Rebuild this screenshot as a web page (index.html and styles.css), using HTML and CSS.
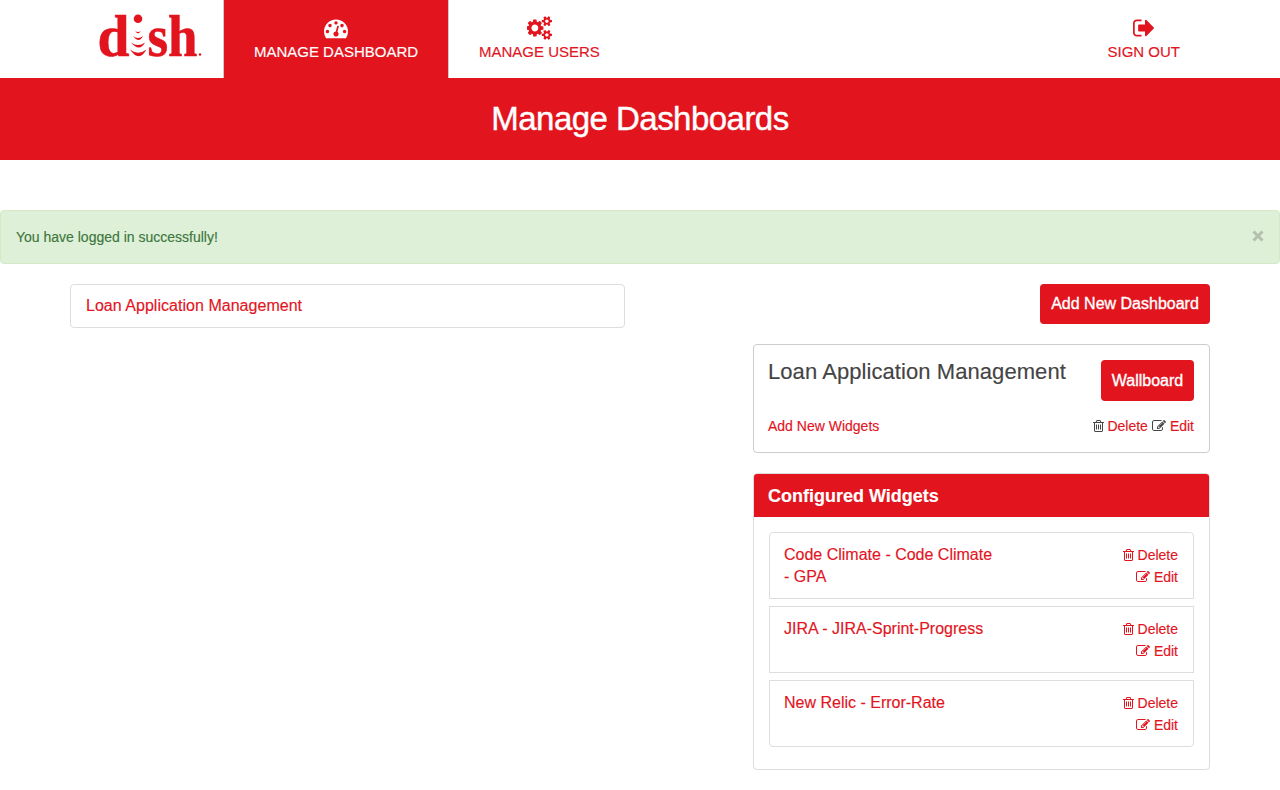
FILE: index.html
```html
<!DOCTYPE html>
<html lang="en">
<head>
<meta charset="utf-8">
<title>Manage Dashboards</title>
<link rel="stylesheet" href="styles.css">
</head>
<body>
<svg class="sprite" aria-hidden="true">
  <symbol id="trash" viewBox="192 0 1408 1792"><path d="M704 736v576q0 14-9 23t-23 9h-64q-14 0-23-9t-9-23v-576q0-14 9-23t23-9h64q14 0 23 9t9 23zm256 0v576q0 14-9 23t-23 9h-64q-14 0-23-9t-9-23v-576q0-14 9-23t23-9h64q14 0 23 9t9 23zm256 0v576q0 14-9 23t-23 9h-64q-14 0-23-9t-9-23v-576q0-14 9-23t23-9h64q14 0 23 9t9 23zm128 724v-948h-896v948q0 22 7 40.5t14.5 27 10.5 8.5h832q3 0 10.5-8.5t14.5-27 7-40.5zm-672-1076h448l-48-117q-7-9-17-11h-317q-10 2-17 11zm928 32v64q0 14-9 23t-23 9h-96v948q0 83-47 143.5t-113 60.5h-832q-66 0-113-58.5t-47-141.5v-952h-96q-14 0-23-9t-9-23v-64q0-14 9-23t23-9h309l70-167q15-37 54-63t79-26h320q40 0 79 26t54 63l70 167h309q14 0 23 9t9 23z"/></symbol>
  <symbol id="edit" viewBox="0 0 1792 1792"><path d="M888 1184l116-116-152-152-116 116v56h96v96h56zm440-720q-16-16-33 1l-350 350q-17 17-1 33t33-1l350-350q17-17 1-33zm80 594v190q0 119-84.5 203.5t-203.5 84.5h-832q-119 0-203.5-84.5t-84.5-203.5v-832q0-119 84.5-203.5t203.5-84.5h832q63 0 117 25 15 7 18 23 3 17-9 29l-49 49q-14 14-32 8-23-6-45-6h-832q-66 0-113 47t-47 113v832q0 66 47 113t113 47h832q66 0 113-47t47-113v-126q0-13 9-22l64-64q15-15 35-7t20 29zm-96-738l288 288-672 672h-288v-288zm444 132l-92 92-288-288 92-92q28-28 68-28t68 28l152 152q28 28 28 68t-28 68z"/></symbol>
</svg>

<nav class="nav">
  <a class="brand" href="#">
    <svg width="108" height="74" viewBox="0 0 108 74" fill="#e2141e">
      <text class="logo-text" x="0.5" y="55" textLength="32" lengthAdjust="spacingAndGlyphs">d</text>
      <circle cx="41" cy="17.800" r="4.300"/>
      <path d="M38 29.500q3 3 6 0q-3 5.500-6 0zM36 35q5 4 10 0q-4 8-10 0zM34 41.500q7 5 14 0q-5.500 10-14 0zM33 48.500q8 6.500 16.500 0q-7.500 13.500-16.500 0z"/>
      <text class="logo-text" x="50.500" y="55" textLength="50" lengthAdjust="spacingAndGlyphs">sh</text>
      <circle cx="103" cy="53.500" r="1.200"/>
    </svg>
  </a>
  <a class="nav-item active" href="#">
    <svg class="nav-icon" width="24" height="24" viewBox="0 0 1792 1792"><path d="M384 1152q0-53-37.5-90.5t-90.5-37.5-90.5 37.5-37.5 90.5 37.5 90.5 90.5 37.5 90.5-37.5 37.5-90.5zm192-448q0-53-37.5-90.5t-90.5-37.5-90.5 37.5-37.5 90.5 37.5 90.5 90.5 37.5 90.5-37.5 37.5-90.5zm428 481l101-382q6-26-7.5-48.5t-38.5-29.5-48 6.5-30 39.5l-101 382q-60 5-107 43.5t-63 98.5q-20 77 20 146t117 89 146-20 89-117q16-60-6-117t-72-91zm660-33q0-53-37.5-90.5t-90.5-37.5-90.5 37.5-37.5 90.5 37.5 90.5 90.5 37.5 90.5-37.5 37.5-90.5zm-640-640q0-53-37.5-90.5t-90.5-37.5-90.5 37.5-37.5 90.5 37.5 90.5 90.5 37.5 90.5-37.5 37.5-90.5zm448 192q0-53-37.5-90.5t-90.5-37.5-90.5 37.5-37.5 90.5 37.5 90.5 90.5 37.5 90.5-37.5 37.5-90.5zm320 448q0 261-141 483-19 29-54 29h-1402q-35 0-54-29-141-221-141-483 0-182 71-348t191-286 286-191 348-71 348 71 286 191 191 286 71 348z"/></svg>
    <span>MANAGE DASHBOARD</span>
  </a>
  <a class="nav-item users" href="#">
    <svg class="nav-icon" width="26" height="24" viewBox="0 0 1920 1792"><path d="M832 896q0-106-75-181t-181-75-181 75-75 181 75 181 181 75 181-75 75-181zm768 512q0-52-38-90t-90-38-90 38-38 90q0 53 37.5 90.5t90.5 37.5 90.5-37.5 37.5-90.5zm0-1024q0-52-38-90t-90-38-90 38-38 90q0 53 37.5 90.5t90.5 37.5 90.5-37.5 37.5-90.5zm-384 421v185q0 10-7 19.5t-16 10.5l-155 24q-11 35-32 76 34 48 90 115 7 11 7 20 0 12-7 19-23 30-82.5 89.5t-78.5 59.5q-11 0-21-7l-115-90q-37 19-77 31-11 108-23 155-7 24-30 24h-186q-11 0-20-7.5t-10-17.5l-23-153q-34-10-75-31l-118 89q-7 7-20 7-11 0-21-8-144-133-144-160 0-9 7-19 10-14 41-53t47-61q-23-44-35-82l-152-24q-10-1-17-9.5t-7-19.5v-185q0-10 7-19.5t16-10.5l155-24q11-35 32-76-34-48-90-115-7-11-7-20 0-12 7-20 22-30 82-89t79-59q11 0 21 7l115 90q34-18 77-32 11-108 23-154 7-24 30-24h186q11 0 20 7.5t10 17.5l23 153q34 10 75 31l118-89q8-7 20-7 11 0 21 8 144 133 144 160 0 8-7 19-12 16-42 54t-45 60q23 48 34 82l152 23q10 2 17 10.5t7 19.5zm640 533v140q0 16-149 31-12 27-30 52 51 113 51 138 0 4-4 7-122 71-124 71-8 0-46-47t-52-68q-20 2-30 2t-30-2q-14 21-52 68t-46 47q-2 0-124-71-4-3-4-7 0-25 51-138-18-25-30-52-149-15-149-31v-140q0-16 149-31 13-29 30-52-51-113-51-138 0-4 4-7 4-2 35-20t59-34 30-16q8 0 46 46.500t52 67.500q20-2 30-2t30 2q51-71 92-112l6-2q4 0 124 70 4 3 4 7 0 25-51 138 17 23 30 52 149 15 149 31zm0-1024v140q0 16-149 31-12 27-30 52 51 113 51 138 0 4-4 7-122 71-124 71-8 0-46-47t-52-68q-20 2-30 2t-30-2q-14 21-52 68t-46 47q-2 0-124-71-4-3-4-7 0-25 51-138-18-25-30-52-149-15-149-31v-140q0-16 149-31 13-29 30-52-51-113-51-138 0-4 4-7 4-2 35-20t59-34 30-16q8 0 46 46.500t52 67.500q20-2 30-2t30 2q51-71 92-112l6-2q4 0 124 70 4 3 4 7 0 25-51 138 17 23 30 52 149 15 149 31z"/></svg>
    <span>MANAGE USERS</span>
  </a>
  <a class="nav-item sign-out" href="#">
    <svg class="nav-icon" width="21" height="24" viewBox="64 0 1568 1792"><path d="M704 1440q0 4 1 20t.5 26.500-3 23.500-10 19.500-20.500 6.500h-320q-119 0-203.500-84.500t-84.500-203.500v-704q0-119 84.500-203.500t203.500-84.500h320q13 0 22.500 9.500t9.500 22.500q0 4 1 20t.5 26.500-3 23.500-10 19.500-20.500 6.500h-320q-66 0-113 47t-47 113v704q0 66 47 113t113 47h312l11.500 1 11.500 3 8 5.500 7 9 2 13.500zm928-544q0 26-19 45l-544 544q-19 19-45 19t-45-19-19-45v-288h-448q-26 0-45-19t-19-45v-384q0-26 19-45t45-19h448v-288q0-26 19-45t45-19 45 19l544 544q19 19 19 45z"/></svg>
    <span>SIGN OUT</span>
  </a>
</nav>

<header class="banner"><h1>Manage Dashboards</h1></header>

<div class="alert">
  <span>You have logged in successfully!</span>
  <svg class="close" width="12" height="12" viewBox="0 0 12 12"><path d="M1.500 1.500l9 9M10.500 1.500l-9 9"/></svg>
</div>

<main class="container">
  <section class="left">
    <a class="dashboard-link" href="#">Loan Application Management</a>
  </section>
  <section class="right">
    <a class="btn add" href="#">Add New Dashboard</a>
    <div class="card">
      <div class="card-row">
        <h2>Loan Application Management</h2>
        <a class="btn wallboard" href="#">Wallboard</a>
      </div>
      <div class="card-links">
        <a href="#">Add New Widgets</a>
        <div class="actions">
          <span class="action"><svg class="trash dark"><use href="#trash"/></svg><a href="#">Delete</a></span>
          <span class="action"><svg class="edit dark"><use href="#edit"/></svg><a href="#">Edit</a></span>
        </div>
      </div>
    </div>
    <div class="panel">
      <h3>Configured Widgets</h3>
      <ul class="widgets">
        <li>
          <a class="name" href="#">Code Climate - Code Climate - GPA</a>
          <div class="item-actions">
            <a class="action" href="#"><svg class="trash"><use href="#trash"/></svg>Delete</a>
            <a class="action" href="#"><svg class="edit"><use href="#edit"/></svg>Edit</a>
          </div>
        </li>
        <li>
          <a class="name" href="#">JIRA - JIRA-Sprint-Progress</a>
          <div class="item-actions">
            <a class="action" href="#"><svg class="trash"><use href="#trash"/></svg>Delete</a>
            <a class="action" href="#"><svg class="edit"><use href="#edit"/></svg>Edit</a>
          </div>
        </li>
        <li>
          <a class="name" href="#">New Relic - Error-Rate</a>
          <div class="item-actions">
            <a class="action" href="#"><svg class="trash"><use href="#trash"/></svg>Delete</a>
            <a class="action" href="#"><svg class="edit"><use href="#edit"/></svg>Edit</a>
          </div>
        </li>
      </ul>
    </div>
  </section>
</main>
</body>
</html>
```
FILE: styles.css
```css
* { box-sizing: border-box; }
body {
  margin: 0;
  background: #fff;
  color: #444;
  font: 14px/20px "Liberation Sans", Arial, sans-serif;
  -webkit-text-stroke: .15px;
}
a { color: #e2141e; text-decoration: none; }
h1, h2, h3, ul { margin: 0; padding: 0; }
svg { display: block; fill: currentColor; flex: none; }
.sprite { display: none; }

.nav {
  display: flex;
  height: 78px;
  padding: 0 70px;
}
.brand { width: 153px; padding: 1px 0 0 27px; }
.logo-text {
  font: bold 60px "Liberation Serif", "Times New Roman", serif;
  stroke: #e2141e;
  stroke-width: .6px;
}
.nav-item {
  display: flex;
  flex-direction: column;
  align-items: center;
  padding: 16px 30px 0;
  font-size: 15px;
  white-space: nowrap;
}
.nav-item span { margin-top: 2px; }
.nav-item.active {
  width: 226px;
  padding: 16px 29px 0;
  background: #e2141e;
  color: #fff;
  border-left: 1px solid #ccc;
  border-right: 1px solid #ccc;
}
.nav-item.users .nav-icon { margin-left: 1px; }
.sign-out { margin-left: auto; }

.banner {
  height: 82px;
  background: #e2141e;
  color: #fff;
  text-align: center;
}
.banner h1 {
  font-size: 33px;
  font-weight: 400;
  line-height: 82px;
  letter-spacing: -.53px;
  -webkit-text-stroke: .4px;
}

.alert {
  display: flex;
  justify-content: space-between;
  align-items: center;
  height: 54px;
  margin: 50px 0 20px;
  padding: 0 15px;
  border: 1px solid #d6e9c6;
  border-radius: 4px;
  background: #dff0d8;
  color: #3c763d;
}
.close { margin-bottom: 2px; fill: none; stroke: #b2c0ad; stroke-width: 3; }

.container {
  display: flex;
  justify-content: space-between;
  align-items: flex-start;
  padding: 0 70px;
}
.left { width: 555px; }
.dashboard-link {
  display: block;
  height: 44px;
  padding: 0 15px;
  border: 1px solid #ddd;
  border-radius: 4px;
  font-size: 16px;
  line-height: 42px;
  letter-spacing: .03px;
}
.right {
  display: flex;
  flex-direction: column;
  width: 457px;
}
.btn {
  border-radius: 4px;
  background: #e2141e;
  color: #fff;
  font-size: 16px;
  text-align: center;
  white-space: nowrap;
  -webkit-text-stroke: .35px;
}
.add { align-self: flex-end; width: 170px; height: 40px; line-height: 40px; }
.wallboard { width: 93px; height: 41px; line-height: 41px; }

.card {
  height: 109px;
  margin-top: 20px;
  padding: 15px 15px 0 14px;
  border: 1px solid #ccc;
  border-radius: 4px;
}
.card-row { display: flex; justify-content: space-between; align-items: flex-start; }
.card h2 {
  font-size: 22px;
  font-weight: 400;
  line-height: 24px;
  letter-spacing: .07px;
  white-space: nowrap;
}
.card-links { display: flex; justify-content: space-between; margin-top: 15px; }
.actions { display: flex; gap: 4px; }
.action { display: flex; align-items: center; gap: 4px; }
.trash { width: 11px; height: 14px; }
.edit { width: 14px; height: 14px; }
.dark { color: #444; }
.trash.dark { margin-right: -1px; }

.panel {
  height: 297px;
  margin-top: 20px;
  border: 1px solid #ddd;
  border-radius: 4px;
  overflow: hidden;
  box-shadow: 0 1px 1px rgba(0, 0, 0, .05);
}
.panel h3 {
  height: 43px;
  padding-left: 14px;
  background: #e2141e;
  color: #fff;
  font-size: 18px;
  line-height: 44px;
}
.widgets {
  display: flex;
  flex-direction: column;
  gap: 7px;
  padding: 15px;
  list-style: none;
}
.widgets li {
  display: flex;
  justify-content: space-between;
  height: 67px;
  padding: 11px 15px 11px 14px;
  border: 1px solid #ddd;
  line-height: 22px;
}
.widgets li:first-child { border-radius: 4px 4px 0 0; }
.widgets li:last-child { border-radius: 0 0 4px 4px; }
.name { width: 212px; font-size: 16px; }
.item-actions { display: flex; flex-direction: column; align-items: flex-end; }
```
